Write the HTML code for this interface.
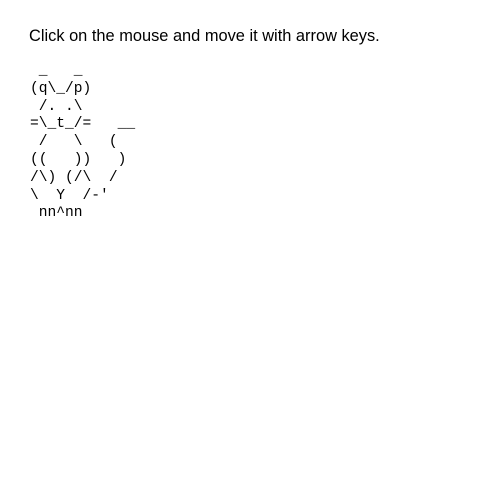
<!DOCTYPE html>
<html><head><style>
body{margin:0;background:#fff;}
.t{position:absolute;left:29px;top:27px;font:16.4px "Liberation Sans",sans-serif;color:#000;white-space:nowrap;}
pre{position:absolute;left:30px;top:63px;margin:0;font:14.6px/17.8px "Liberation Mono",monospace;color:#000;}
</style></head><body>
<div class="t">Click on the mouse and move it with arrow keys.</div>
<pre> _   _
(q\_/p)
 /. .\
=\_t_/=   __
 /   \   (
((   ))   )
/\) (/\  /
\  Y  /-'
 nn^nn</pre>
</body></html>
